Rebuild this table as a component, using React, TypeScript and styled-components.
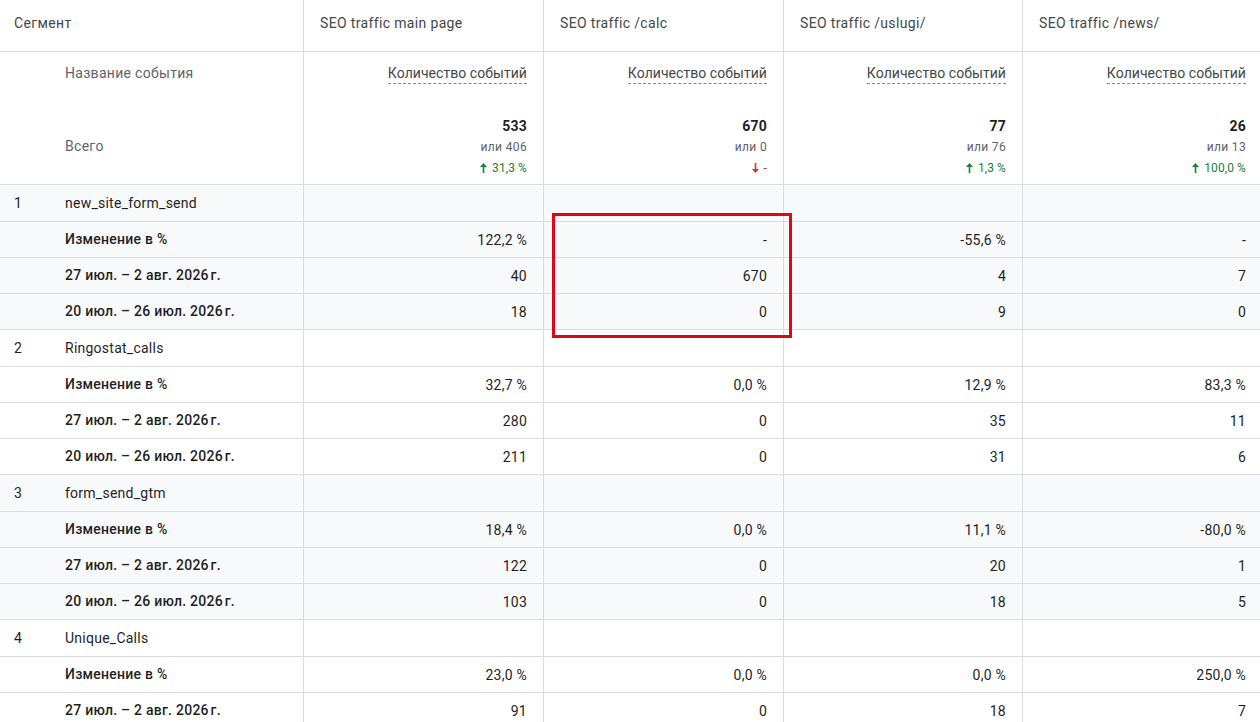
import React from "react";
import styled, { createGlobalStyle } from "styled-components";

const GlobalStyle = createGlobalStyle`
  html, body {
    margin: 0;
    padding: 0;
    background: #ffffff;
    overflow: hidden;
  }
  body {
    font-family: Roboto, "Liberation Sans", Arial, sans-serif;
    color: #202124;
    -webkit-font-smoothing: antialiased;
  }
`;

const COLS = "304px 240px 240px 239px 240px";
const BORDER = "#dadce0";

type Total = { value: string; prev: string; delta: string; up: boolean };

const columns = [
	"SEO traffic main page",
	"SEO traffic /calc",
	"SEO traffic /uslugi/",
	"SEO traffic /news/",
];

const totals: Total[] = [
	{ value: "533", prev: "или 406", delta: "31,3 %", up: true },
	{ value: "670", prev: "или 0", delta: "-", up: false },
	{ value: "77", prev: "или 76", delta: "1,3 %", up: true },
	{ value: "26", prev: "или 13", delta: "100,0 %", up: true },
];

const WEEK_A = "27 июл. – 2 авг. 2026\u202Fг.";
const WEEK_B = "20 июл. – 26 июл. 2026\u202Fг.";

const segments = [
	{
		name: "new_site_form_send",
		rows: [
			["Изменение в %", "122,2 %", "-", "-55,6 %", "-"],
			[WEEK_A, "40", "670", "4", "7"],
			[WEEK_B, "18", "0", "9", "0"],
		],
	},
	{
		name: "Ringostat_calls",
		rows: [
			["Изменение в %", "32,7 %", "0,0 %", "12,9 %", "83,3 %"],
			[WEEK_A, "280", "0", "35", "11"],
			[WEEK_B, "211", "0", "31", "6"],
		],
	},
	{
		name: "form_send_gtm",
		rows: [
			["Изменение в %", "18,4 %", "0,0 %", "11,1 %", "-80,0 %"],
			[WEEK_A, "122", "0", "20", "1"],
			[WEEK_B, "103", "0", "18", "5"],
		],
	},
	{
		name: "Unique_Calls",
		rows: [
			["Изменение в %", "23,0 %", "0,0 %", "0,0 %", "250,0 %"],
			[WEEK_A, "91", "0", "18", "7"],
		],
	},
];

const Arrow: React.FC<{ up: boolean }> = ({ up }) => (
	<svg
		width="7"
		height="10"
		viewBox="0 0 7 10"
		style={{ transform: up ? undefined : "rotate(180deg)" }}
	>
		<path d="M3.5 0 L7 4 H4.3 V10 H2.7 V4 H0 Z" fill="currentColor" />
	</svg>
);

export default function App() {
	return (
		<>
			<GlobalStyle />
			<Table>
				<HeadRow>
					<HeadCell $first>Сегмент</HeadCell>
					{columns.map((c) => (
						<HeadCell key={c}>{c}</HeadCell>
					))}
				</HeadRow>

				<MetricRow>
					<DimCell>
						<DimLabel>Название события</DimLabel>
						<TotalLabel>Всего</TotalLabel>
					</DimCell>
					{totals.map((t, i) => (
						<MetricCell key={i}>
							<MetricName>Количество событий</MetricName>
							<TotalBlock>
								<TotalValue>{t.value}</TotalValue>
								<TotalPrev>{t.prev}</TotalPrev>
								<Delta $up={t.up}>
									<Arrow up={t.up} />
									{t.delta}
								</Delta>
							</TotalBlock>
						</MetricCell>
					))}
				</MetricRow>

				{segments.map((s, si) => (
					<React.Fragment key={s.name}>
						<SegmentRow $shaded={si % 2 === 0}>
							<NameCell>
								<Index>{si + 1}</Index>
								<SegmentName>{s.name}</SegmentName>
							</NameCell>
							<ValueCell />
							<ValueCell />
							<ValueCell />
							<ValueCell />
						</SegmentRow>
						{s.rows.map((r, ri) => (
							<SubRow key={ri} $shaded={si % 2 === 0}>
								<NameCell>
									<Index />
									<SubLabel>{r[0]}</SubLabel>
								</NameCell>
								{r.slice(1).map((v, vi) => (
									<ValueCell key={vi}>{v}</ValueCell>
								))}
							</SubRow>
						))}
					</React.Fragment>
				))}

				<Highlight />
			</Table>
		</>
	);
}

const Table = styled.div`
  position: relative;
  width: 1263px;
  font-size: 14px;
  line-height: 16px;
  letter-spacing: 0.25px;
`;

const Row = styled.div`
  display: grid;
  grid-template-columns: ${COLS};
  border-bottom: 1px solid ${BORDER};
  box-sizing: border-box;
`;

const HeadRow = styled(Row)`
  height: 52px;
`;

const HeadCell = styled.div<{ $first?: boolean }>`
  padding: 15px 16px 0 ${(p) => (p.$first ? "14px" : "16px")};
  color: #444746;
  letter-spacing: 0.35px;
  border-right: 1px solid ${BORDER};
  white-space: nowrap;
`;

const MetricRow = styled(Row)`
  height: 133px;
`;

const DimCell = styled.div`
  display: flex;
  flex-direction: column;
  padding: 13px 16px 30px 65px;
  border-right: 1px solid ${BORDER};
  color: #5f6368;
  letter-spacing: 0.3px;
`;

const DimLabel = styled.div``;

const TotalLabel = styled.div`
  margin-top: auto;
`;

const MetricCell = styled.div`
  display: flex;
  flex-direction: column;
  align-items: flex-end;
  padding: 13px 16px 6px;
  border-right: 1px solid ${BORDER};
`;

const MetricName = styled.span`
  color: #444746;
  letter-spacing: 0.05px;
  padding-bottom: 2px;
  border-bottom: 1px dashed #80868b;
  white-space: nowrap;
`;

const TotalBlock = styled.div`
  margin-top: auto;
  display: flex;
  flex-direction: column;
  align-items: flex-end;
  line-height: 20.5px;
`;

const TotalValue = styled.div`
  font-weight: 700;
  font-size: 14px;
  color: #1f1f1f;
`;

const TotalPrev = styled.div`
  font-size: 12px;
  color: #5f6368;
  letter-spacing: 0.35px;
  margin-top: 1px;
`;

const Delta = styled.div<{ $up: boolean }>`
  display: flex;
  align-items: center;
  gap: 5px;
  font-size: 12px;
  letter-spacing: 0.1px;
  color: ${(p) => (p.$up ? "#188038" : "#d93025")};
`;

const SegmentRow = styled(Row)<{ $shaded: boolean }>`
  height: 37px;
  background: ${(p) => (p.$shaded ? "#f8f9fa" : "#ffffff")};
`;

const SubRow = styled(Row)<{ $shaded: boolean }>`
  height: 36px;
  background: ${(p) => (p.$shaded ? "#f8f9fa" : "#ffffff")};
`;

const NameCell = styled.div`
  display: grid;
  grid-template-columns: 51px 1fr;
  align-items: center;
  padding-left: 14px;
  padding-bottom: 1px;
  border-right: 1px solid ${BORDER};
  white-space: nowrap;
`;

const Index = styled.span`
  color: #1f1f1f;
`;

const SegmentName = styled.span`
  color: #1f1f1f;
`;

const SubLabel = styled.span`
  font-weight: 500;
  color: #1f1f1f;
`;

const ValueCell = styled.div`
  display: flex;
  align-items: center;
  justify-content: flex-end;
  padding-right: 16px;
  border-right: 1px solid ${BORDER};
  color: #1f1f1f;
`;

const Highlight = styled.div`
  position: absolute;
  left: 552px;
  top: 213px;
  width: 240px;
  height: 125px;
  box-sizing: border-box;
  border: 3px solid #e0061a;
  pointer-events: none;
`;
